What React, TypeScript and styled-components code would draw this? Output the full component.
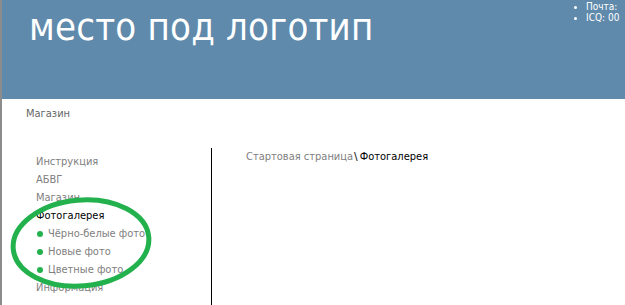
import styled, { createGlobalStyle } from "styled-components";

const GlobalStyle = createGlobalStyle`
  html, body {
    margin: 0;
    padding: 0;
    background: #fff;
  }
  body {
    font-family: "DejaVu Sans Condensed", "DejaVu Sans", sans-serif;
  }
`;

const menu = [
  { label: "Инструкция" },
  { label: "АБВГ" },
  { label: "Магазин" },
  { label: "Фотогалерея", active: true },
];

const subMenu = ["Чёрно-белые фото", "Новые фото", "Цветные фото"];

function App() {
  return (
    <Page>
      <GlobalStyle />
      <Header>
        <Logo>место под логотип</Logo>
        <Contacts>
          <li>Почта:</li>
          <li>ICQ: 00</li>
        </Contacts>
      </Header>

      <TopNav>
        <NavLink>Магазин</NavLink>
      </TopNav>

      <Main>
        <Sidebar>
          {menu.map((m) => (
            <MenuItem key={m.label} $active={m.active}>
              {m.label}
            </MenuItem>
          ))}
          <SubList>
            {subMenu.map((s) => (
              <SubItem key={s}>{s}</SubItem>
            ))}
          </SubList>
          <MenuItem>Информация</MenuItem>

          {/* пометка от руки */}
          <Mark width="150" height="100" viewBox="0 0 150 100">
            <ellipse
              cx="73"
              cy="49"
              rx="68"
              ry="43"
              fill="none"
              stroke="#22b14c"
              strokeWidth="5"
              transform="rotate(-5 73 49)"
            />
          </Mark>
        </Sidebar>

        <Content>
          <Crumbs>
            <CrumbLink>Стартовая страница</CrumbLink>
            <CrumbSep>\</CrumbSep>
            <CrumbCurrent>Фотогалерея</CrumbCurrent>
          </Crumbs>
        </Content>
      </Main>
    </Page>
  );
}

const Page = styled.div`
  position: relative;
  width: 625px;
  height: 305px;
  overflow: hidden;
  border-left: 2px solid #8c8c8c;
  box-sizing: border-box;
`;

const Header = styled.div`
  height: 99px;
  background: #608aab;
  display: flex;
  justify-content: space-between;
  align-items: flex-start;
  overflow: hidden;
`;

const Logo = styled.div`
  color: #fff;
  font-size: 38px;
  line-height: 1;
  padding: 8px 0 0 27px;
  letter-spacing: 0.2px;
`;

const Contacts = styled.ul`
  margin: 1px 0 0;
  padding: 0 0 0 14px;
  width: 39px;
  flex-shrink: 0;
  white-space: nowrap;
  overflow: hidden;
  color: #fff;
  font-size: 10px;
  line-height: 11px;
  list-style: disc outside;
  li::marker {
    font-size: 9px;
  }
`;

const TopNav = styled.div`
  display: flex;
  padding: 8px 0 0 24px;
  height: 49px;
  box-sizing: border-box;
`;

const NavLink = styled.span`
  font-size: 11px;
  color: #666;
`;

const Main = styled.div`
  display: flex;
`;

const Sidebar = styled.div`
  position: relative;
  width: 210px;
  height: 160px;
  border-right: 1px solid #000;
  padding: 5px 0 0 34px;
  box-sizing: border-box;
`;

const MenuItem = styled.div<{ $active?: boolean }>`
  font-size: 11px;
  line-height: 18px;
  color: ${(p) => (p.$active ? "#000" : "#808080")};
`;

const SubList = styled.ul`
  margin: 0;
  padding: 0 0 0 12px;
  list-style: none;
`;

const SubItem = styled.li`
  position: relative;
  font-size: 11px;
  line-height: 18px;
  color: #808080;
  &::before {
    content: "";
    position: absolute;
    left: -11px;
    top: 6px;
    width: 6px;
    height: 6px;
    border-radius: 50%;
    background: #22b14c;
  }
`;

const Mark = styled.svg`
  position: absolute;
  left: 6px;
  top: 46px;
`;

const Content = styled.div`
  flex: 1;
  padding: 2px 0 0 34px;
`;

const Crumbs = styled.div`
  font-size: 11px;
  line-height: 14px;
`;

const CrumbLink = styled.span`
  color: #808080;
`;

const CrumbSep = styled.span`
  color: #333;
  font-weight: bold;
  margin: 0 2px 0 1px;
`;

const CrumbCurrent = styled.span`
  color: #000;
`;

export default App;
